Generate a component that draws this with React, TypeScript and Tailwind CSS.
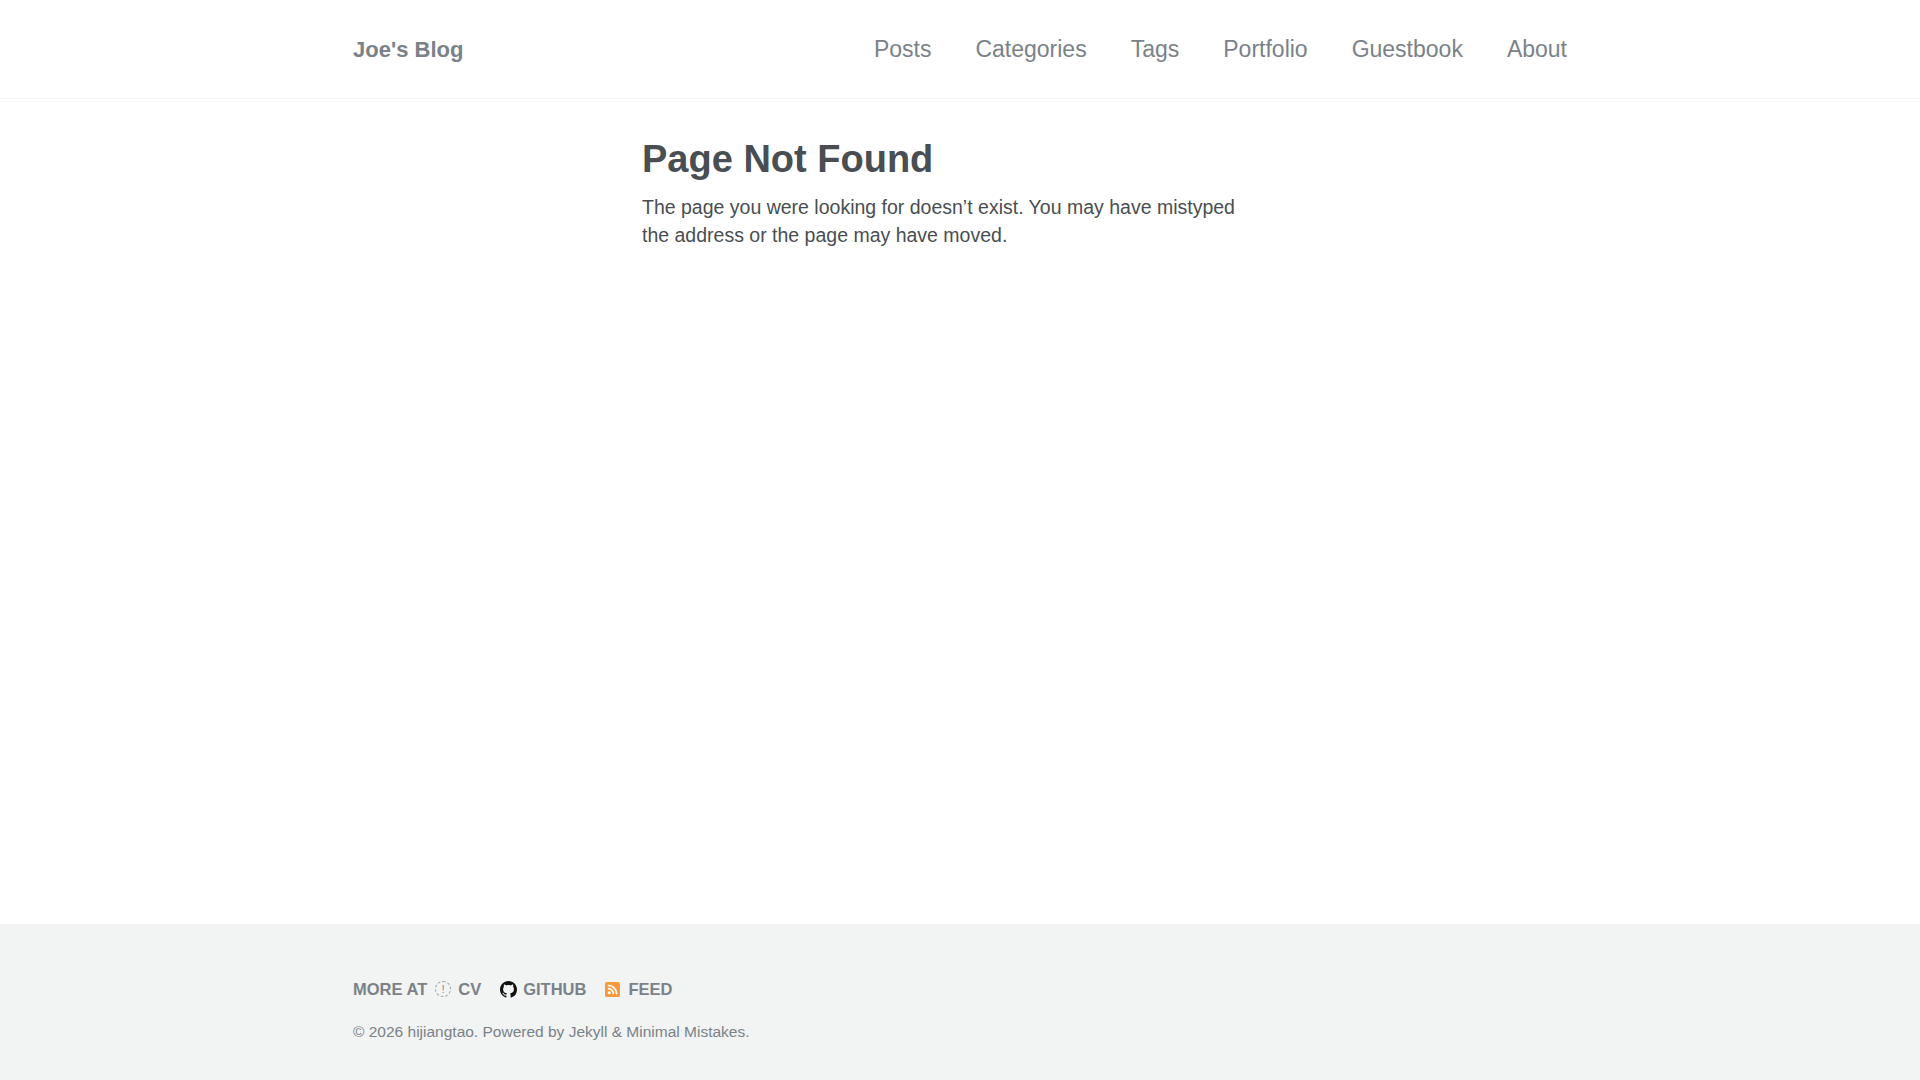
import React from "react";

export default function App() {
  const nav = ["Posts", "Categories", "Tags", "Portfolio", "Guestbook", "About"];
  return (
    <div className="flex min-h-[1080px] flex-col bg-white text-[#494e52]" style={{ fontFamily: '"Liberation Sans", Arial, sans-serif' }}>
      <header className="flex h-[99px] items-center border-b border-[#f2f3f3]">
        <div className="mx-auto flex w-[1214px] items-center">
          <span className="text-[22px] font-bold text-[#7a8288]">Joe's Blog</span>
          <nav className="ml-auto flex gap-[44px] text-[23px] text-[#7a8288]">
            {nav.map((n) => (
              <span key={n}>{n}</span>
            ))}
          </nav>
        </div>
      </header>
      <main className="flex-1">
        <div className="ml-[642px] w-[610px] pt-[38px]">
          <h1 className="text-[38px] font-bold leading-[1.2] text-[#494e52]">Page Not Found</h1>
          <p className="mt-[10px] text-[19.5px] leading-[28px] text-[#494e52]">
            The page you were looking for doesn’t exist. You may have mistyped the address or the page may have moved.
          </p>
        </div>
      </main>
      <footer className="h-[156px] bg-[#f2f3f3]">
        <div className="mx-auto w-[1214px] pt-[53px]">
          <div className="flex items-center text-[16.5px] font-bold uppercase text-[#7a8288]">
            <span>More at</span>
            <span className="ml-[8px] mr-[7px] flex h-[16px] w-[16px] items-center justify-center rounded-full border border-dashed border-[#9aa0a5] text-[10px] font-normal">!</span>
            <span>CV</span>
            <svg className="ml-[19px] mr-[6px]" width="17" height="17" viewBox="0 0 16 16" fill="#111">
              <path d="M8 0C3.58 0 0 3.58 0 8c0 3.54 2.29 6.53 5.47 7.59.4.07.55-.17.55-.38 0-.19-.01-.82-.01-1.49-2.01.37-2.53-.49-2.69-.94-.09-.23-.48-.94-.82-1.13-.28-.15-.68-.52-.01-.53.63-.01 1.08.58 1.23.82.72 1.21 1.87.87 2.33.66.07-.52.28-.87.51-1.07-1.78-.2-3.64-.89-3.64-3.95 0-.87.31-1.59.82-2.15-.08-.2-.36-1.02.08-2.12 0 0 .67-.21 2.2.82.64-.18 1.32-.27 2-.27.68 0 1.36.09 2 .27 1.53-1.04 2.2-.82 2.2-.82.44 1.1.16 1.92.08 2.12.51.56.82 1.27.82 2.15 0 3.07-1.87 3.75-3.65 3.95.29.25.54.73.54 1.48 0 1.07-.01 1.93-.01 2.2 0 .21.15.46.55.38A8.013 8.013 0 0016 8c0-4.42-3.58-8-8-8z" />
            </svg>
            <span>GitHub</span>
            <svg className="ml-[19px] mr-[8px]" width="15" height="15" viewBox="0 0 16 16">
              <rect width="16" height="16" rx="2" fill="#f89a3a" />
              <circle cx="4.5" cy="11.5" r="1.6" fill="#fff" />
              <path d="M3 7a6 6 0 016 6" stroke="#fff" strokeWidth="1.8" fill="none" />
              <path d="M3 3.5A9.5 9.5 0 0112.5 13" stroke="#fff" strokeWidth="1.8" fill="none" />
            </svg>
            <span>Feed</span>
          </div>
          <div className="mt-[18px] text-[15.5px] text-[#7a8288]">© 2026 hijiangtao. Powered by Jekyll &amp; Minimal Mistakes.</div>
        </div>
      </footer>
    </div>
  );
}
